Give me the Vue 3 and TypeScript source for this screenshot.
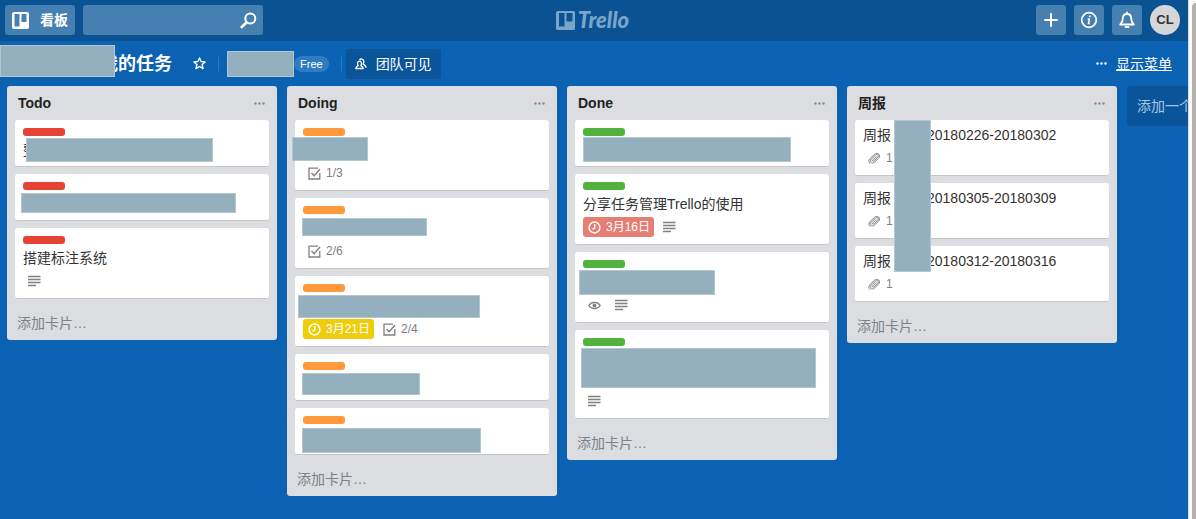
<script setup lang="ts">
interface Box { x: number; y: number; w: number; h: number }
interface Badge { kind: 'due' | 'check' | 'text' | 'eye' | 'clip'; label?: string; tone?: 'soon' | 'past' }
interface Card { title: string; suffix?: string; color?: 'red' | 'orange' | 'green'; lines?: number; badges?: Badge[]; cover?: Box }
interface List { name: string; cards: Card[]; cover?: Box }

const lists: List[] = [
  {
    name: 'Todo',
    cards: [
      { title: '整', color: 'red', cover: { x: 11, y: 18, w: 187, h: 24 } },
      { title: '', color: 'red', cover: { x: 6, y: 19, w: 215, h: 20 } },
      { title: '搭建标注系统', color: 'red', badges: [{ kind: 'text' }] },
    ],
  },
  {
    name: 'Doing',
    cards: [
      { title: '', color: 'orange', badges: [{ kind: 'check', label: '1/3' }], cover: { x: -3, y: 17, w: 76, h: 24 } },
      { title: '', color: 'orange', badges: [{ kind: 'check', label: '2/6' }], cover: { x: 7, y: 20, w: 125, h: 18 } },
      {
        title: '', color: 'orange',
        badges: [{ kind: 'due', label: '3月21日', tone: 'soon' }, { kind: 'check', label: '2/4' }],
        cover: { x: 3, y: 19, w: 182, h: 23 },
      },
      { title: '', color: 'orange', cover: { x: 7, y: 19, w: 118, h: 22 } },
      { title: '', color: 'orange', cover: { x: 7, y: 20, w: 179, h: 25 } },
    ],
  },
  {
    name: 'Done',
    cards: [
      { title: '', color: 'green', cover: { x: 8, y: 17, w: 208, h: 25 } },
      { title: '分享任务管理Trello的使用', color: 'green', badges: [{ kind: 'due', label: '3月16日', tone: 'past' }, { kind: 'text' }] },
      { title: '', color: 'green', badges: [{ kind: 'eye' }, { kind: 'text' }], cover: { x: 4, y: 18, w: 136, h: 25 } },
      { title: '', color: 'green', lines: 2, badges: [{ kind: 'text' }], cover: { x: 6, y: 18, w: 235, h: 40 } },
    ],
  },
  {
    name: '周报',
    cards: [
      { title: '周报', suffix: '20180226-20180302', badges: [{ kind: 'clip', label: '1' }] },
      { title: '周报', suffix: '20180305-20180309', badges: [{ kind: 'clip', label: '1' }] },
      { title: '周报', suffix: '20180312-20180316', badges: [{ kind: 'clip', label: '1' }] },
    ],
    cover: { x: 39, y: 0, w: 37, h: 152 },
  },
]

const place = (b: Box) => ({ left: `${b.x}px`, top: `${b.y}px`, width: `${b.w}px`, height: `${b.h}px` })
</script>

<template>
  <div class="window">
    <div class="app">
      <header class="top">
        <div class="side">
          <button class="btn boards" type="button">
            <svg width="17" height="17" viewBox="0 0 17 17" aria-hidden="true">
              <path fill="#fff" fill-rule="evenodd" d="M2 0h13a2 2 0 0 1 2 2v13a2 2 0 0 1-2 2H2a2 2 0 0 1-2-2V2a2 2 0 0 1 2-2zM2.500 2v12.500H7.500V2zM9.500 2v8H14.500V2z" />
            </svg>
            <span>看板</span>
          </button>
          <div class="search">
            <input type="text" aria-label="搜索">
            <svg width="17" height="17" viewBox="0 0 17 17" fill="none" stroke="#fff" aria-hidden="true">
              <circle cx="10.300" cy="6.500" r="5" stroke-width="2" />
              <path d="M6.500 10.500L1.800 15" stroke-width="2.800" stroke-linecap="round" />
            </svg>
          </div>
        </div>
        <a class="logo" href="#">
          <svg width="19" height="19" viewBox="0 0 19 19" aria-hidden="true">
            <path fill="currentColor" fill-rule="evenodd" d="M1.500 0h16A1.500 1.500 0 0 1 19 1.500v16a1.500 1.500 0 0 1-1.500 1.500h-16A1.500 1.500 0 0 1 0 17.500v-16A1.500 1.500 0 0 1 1.500 0zM3 2v13.500H8.500V2zM10.500 2v8.500H16.500V2z" />
          </svg>
          <span>Trello</span>
        </a>
        <div class="side end">
          <button class="btn icon" type="button" aria-label="新建">
            <svg width="16" height="16" viewBox="0 0 16 16" stroke="#fff" stroke-width="2" stroke-linecap="round"><path d="M8 2v12M2 8h12" /></svg>
          </button>
          <button class="btn icon" type="button" aria-label="信息">
            <svg width="18" height="18" viewBox="0 0 18 18" fill="none" stroke="#fff">
              <circle cx="9" cy="9" r="7.300" stroke-width="1.700" />
              <path d="M7.700 8h1.700l-1 4.500h1.300" stroke-width="1.500" stroke-linejoin="round" />
              <circle cx="9.900" cy="5.300" r=".6" fill="#fff" />
            </svg>
          </button>
          <button class="btn icon" type="button" aria-label="通知">
            <svg width="18" height="18" viewBox="0 0 18 18" fill="none" stroke="#fff" stroke-width="1.800" stroke-linejoin="round" stroke-linecap="round">
              <path d="M2.200 13.500C4.500 11.500 4.800 10 4.800 7.500C4.800 4.700 6.600 3 9 3s4.200 1.700 4.200 4.500c0 2.500.3 4 2.600 6z" />
              <path d="M9 1.500V3M7.500 16h3" />
            </svg>
          </button>
          <button class="avatar" type="button">CL</button>
        </div>
      </header>

      <div class="bar">
        <h1><span class="cover name-cover"></span>我的任务</h1>
        <button class="plain star" type="button" aria-label="收藏">
          <svg width="13" height="13" viewBox="0 0 13 13" fill="none" stroke="#fff" stroke-width="1.400" stroke-linejoin="round">
            <path d="M6.500 1l1.600 3.500 3.900.4-2.900 2.600.9 4.100-3.500-2.100L3 11.600l.9-4.100L1 4.900l3.900-.4z" />
          </svg>
        </button>
        <span class="rule"></span>
        <span class="team"></span>
        <span class="free">Free</span>
        <span class="rule"></span>
        <button class="visibility" type="button">
          <svg width="12" height="12" viewBox="0 0 12 12" fill="none" stroke="#fff" stroke-width="1.300" stroke-linejoin="round" aria-hidden="true">
            <path d="M.8 10.500c0-1.800 1-2.400 2.400-2.900C1.900 5.300 2.600 3.200 4.500 3.200s2.600 2.100 1.300 4.400c1.400.5 2.400 1.100 2.400 2.900z" />
            <path d="M4.500 2C5.500.5 8.300.7 8.800 2.800c.3 1.300-.1 2.300-.7 3.300 1.900.8 2.800 1.600 2.900 3.600" />
          </svg>
          <span>团队可见</span>
        </button>
        <a class="menu" href="#">
          <svg width="11" height="3" viewBox="0 0 11 3" fill="#fff" aria-hidden="true"><circle cx="1.500" cy="1.500" r="1.200" /><circle cx="5.500" cy="1.500" r="1.200" /><circle cx="9.500" cy="1.500" r="1.200" /></svg>
          <span>显示菜单</span>
        </a>
      </div>

      <main class="board">
        <section v-for="list in lists" :key="list.name" class="list">
          <div class="list-head">
            <h2>{{ list.name }}</h2>
            <button class="plain" type="button" aria-label="列表操作">
              <svg width="11" height="3" viewBox="0 0 11 3" fill="#8c8c8c"><circle cx="1.500" cy="1.500" r="1.200" /><circle cx="5.500" cy="1.500" r="1.200" /><circle cx="9.500" cy="1.500" r="1.200" /></svg>
            </button>
          </div>
          <div class="cards">
            <article v-for="(card, i) in list.cards" :key="i" class="card">
              <span v-if="card.color" class="tag" :class="card.color"></span>
              <p class="title" :class="{ tall: card.lines === 2 }">{{ card.title }}<span v-if="card.suffix" class="suffix">{{ card.suffix }}</span></p>
              <div v-if="card.badges" class="badges">
                <span v-for="badge in card.badges" :key="badge.kind" class="badge" :class="badge.tone">
                  <svg width="13" height="13" viewBox="0 0 13 13" fill="none" stroke="currentColor" aria-hidden="true">
                    <template v-if="badge.kind === 'due'">
                      <circle cx="6.500" cy="6.500" r="5.400" stroke-width="1.500" />
                      <path d="M6.700 3v3.800L4.500 8.300" stroke-width="1.400" />
                    </template>
                    <path v-else-if="badge.kind === 'text'" d="M0 1.500h12.500M0 4.500h12.500M0 7.500h12.500M0 10.500h8" stroke-width="1.300" />
                    <template v-else-if="badge.kind === 'check'">
                      <path d="M10 1.200H1v10.800h10.800V6" stroke-width="1.300" />
                      <path d="M3.500 6l2.700 2.700L12 2" stroke-width="1.500" />
                    </template>
                    <template v-else-if="badge.kind === 'eye'">
                      <path d="M.8 6.500C3.300 2.300 9.700 2.300 12.200 6.500C9.700 10.700 3.300 10.700.8 6.500z" stroke-width="1.300" />
                      <circle cx="6.500" cy="6.500" r="1.900" fill="currentColor" stroke="none" />
                    </template>
                    <path v-else stroke-width="1" stroke-linecap="round" stroke-linejoin="round" d="M8.300 4.600L4.800 7.900c-.8.900.3 1.800 1.100 1L9.800 5.200c1.600-1.700-.6-3.600-2.200-2.100L3.300 7.200c-2.200 2.300.9 5.100 3.100 3L10.500 6.200c2.800-2.900-1-6.600-4-3.900L1.800 6.800c-1.500 1.600-1 3.600.2 4.700" />
                  </svg>
                  <span v-if="badge.label">{{ badge.label }}</span>
                </span>
              </div>
              <span v-if="card.cover" class="cover" :style="place(card.cover)"></span>
            </article>
            <span v-if="list.cover" class="cover" :style="place(list.cover)"></span>
          </div>
          <button class="add-card" type="button">添加卡片…</button>
        </section>
        <button class="add-list" type="button">添加一个列表…</button>
      </main>
    </div>
    <div class="track"><div class="thumb"></div></div>
  </div>
</template>

<style>
body { margin: 0; }
</style>

<style scoped>
* { box-sizing: border-box; }
.window {
  display: flex;
  height: 100vh;
  overflow: hidden;
  font: 14px/18px "Liberation Sans", "Noto Sans CJK SC", sans-serif;
  color: #333;
}
button, input { font: inherit; border: 0; padding: 0; margin: 0; }
h1, h2, p { margin: 0; }
svg { display: block; flex: none; }
.app { flex: 1; min-width: 0; overflow: hidden; background: #0b62b2; display: flex; flex-direction: column; }
.track { flex: none; width: 8px; padding: 3px 0 0 3px; background: #fafafa; border-left: 1px solid #dcdcdc; }
.thumb { height: 100%; background: #b1b1b1; border-radius: 4px 0 0 0; }

.top { display: flex; align-items: center; height: 41px; padding: 0 8px 1px 5px; background: #0b5292; flex: none; }
.side { flex: 1; display: flex; gap: 8px; }
.end { justify-content: flex-end; }
.btn { height: 30px; border-radius: 3px; background: #4580b1; color: #fff; display: flex; align-items: center; justify-content: center; }
.boards { width: 70px; gap: 11px; font-weight: 700; }
.icon { width: 30px; }
.search { display: flex; align-items: center; width: 180px; height: 30px; padding-right: 6px; border-radius: 3px; background: #4580b1; }
.search input { flex: 1; min-width: 0; height: 30px; padding-left: 8px; background: transparent; color: #fff; }
.logo { display: flex; align-items: center; gap: 3px; color: #79a5cb; text-decoration: none; font: italic 900 22px/24px Lato, sans-serif; }
.avatar { width: 30px; height: 30px; border-radius: 50%; background: #d5d6d8; color: #333; font-size: 13px; font-weight: 700; }

.bar { display: flex; align-items: center; height: 45px; flex: none; color: #fff; padding-right: 16px; }
h1 { position: relative; padding-left: 100px; font-size: 18px; line-height: 32px; font-weight: 700; white-space: nowrap; }
.cover { position: absolute; background: #94b0bf; border: 1px solid #b3c7d1; }
.name-cover { left: 0; top: -3px; width: 115px; height: 32px; }
.plain { background: none; display: flex; align-items: center; }
.star { margin: 0 12px 0 21px; }
.rule { width: 1px; height: 14px; background: #2f78bc; }
.team { width: 67px; height: 26px; margin-left: 8px; background: #94b0bf; border: 1px solid #b3c7d1; }
.free { height: 16px; padding: 0 6px; margin-right: 12px; border-radius: 8px; background: #2f7cc0; font-size: 11px; line-height: 16px; }
.visibility { display: flex; align-items: center; gap: 9px; height: 30px; margin-left: 4px; padding: 0 9px; border-radius: 3px; background: #0a5599; color: #fff; }
.menu { display: flex; align-items: center; gap: 9px; margin-left: auto; color: #fff; text-decoration: none; }
.menu span { text-decoration: underline; }

.board { display: flex; align-items: flex-start; gap: 10px; padding-left: 7px; }
.list { flex: none; width: 270px; border-radius: 3px; background: #dcdde1; }
.list-head { display: flex; align-items: center; justify-content: space-between; height: 34px; padding: 0 12px 0 11px; }
h2 { font-size: 14px; line-height: 18px; font-weight: 700; color: #222; }
.cards { position: relative; display: flex; flex-direction: column; gap: 7px; margin: 0 8px; }
.card { position: relative; padding: 6px 8px 7px; border-radius: 3px; background: #fff; border-bottom: 1px solid #c4c6c8; }
.tag { display: block; width: 42px; height: 8px; margin: 2px 0 5px; border-radius: 3px; }
.red { background: #e64335; }
.orange { background: #ff9a3c; }
.green { background: #51b33d; }
.title { min-height: 18px; white-space: nowrap; }
.tall { min-height: 36px; }
.suffix { margin-left: 36px; }
.badges { display: flex; gap: 4px; margin-top: 4px; }
.badge { display: flex; align-items: center; gap: 5px; height: 20px; padding: 0 4px 0 5px; border-radius: 3px; color: #808080; font-size: 12px; }
.badge:not(.soon, .past) { padding-right: 5px; }
.soon { background: #efcd0b; color: #fff; }
.past { background: #e67e74; color: #fff; }
.add-card { display: block; width: 100%; height: 41px; padding: 6px 10px 0; background: none; text-align: left; color: #7b8388; }
.add-list { flex: none; width: 270px; height: 40px; padding-left: 10px; border-radius: 3px; background: #0a5599; color: #a9c6e0; text-align: left; }
</style>
